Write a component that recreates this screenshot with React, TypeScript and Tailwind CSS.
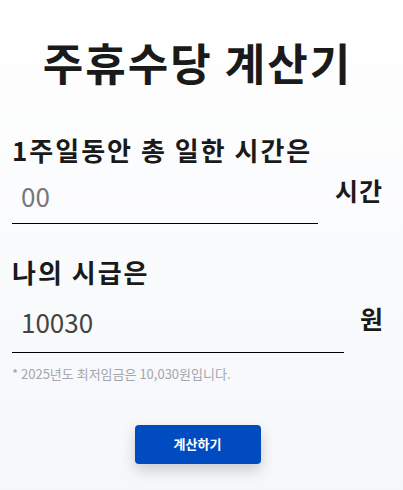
import React, { useState } from "react";

export default function App() {
  const [hours, setHours] = useState("");
  const [wage, setWage] = useState("10030");
  const font = { fontFamily: '"Noto Sans CJK KR", "Noto Sans", sans-serif' };
  return (
    <div
      className="min-h-[490px] w-full bg-gradient-to-b from-white to-[#f5f7fa] text-[#1a1a1a]"
      style={font}
    >
      <div className="mr-2 flex flex-col pt-[30px]">
        <h1 className="text-center text-[44px] font-bold leading-[64px] tracking-[2px]">
          주휴수당 계산기
        </h1>

        <div className="mt-[40px] px-3">
          <label className="block text-[26px] font-bold leading-[32px] tracking-[2px]">
            1주일동안 총 일한 시간은
          </label>
          <div className="mt-[2px] flex items-center">
            <input
              value={hours}
              onChange={(e) => setHours(e.target.value)}
              placeholder="00"
              className="h-[56px] min-w-0 flex-1 border-b border-black bg-transparent px-[9px] text-[26px] text-[#444] placeholder:text-[#777] outline-none"
              style={font}
            />
            <span className="mb-[11px] ml-[17px] text-[25px] font-bold tracking-[1px]">시간</span>
          </div>
        </div>

        <div className="mt-[32px] px-3">
          <label className="block text-[26px] font-bold leading-[32px] tracking-[2px]">나의 시급은</label>
          <div className="mt-[2px] flex items-center">
            <input
              value={wage}
              onChange={(e) => setWage(e.target.value)}
              className="h-[63px] min-w-0 flex-1 border-b border-black bg-transparent px-[9px] text-[26px] text-[#444] outline-none"
              style={font}
            />
            <span className="mb-[6px] ml-[16px] text-[25px] font-bold">원</span>
          </div>
          <p className="mt-[11px] text-[13px] text-[#a3a6ab]">* 2025년도 최저임금은 10,030원입니다.</p>
        </div>

        <div className="mt-[41px] flex justify-center">
          <button className="h-[39px] w-[126px] rounded-[4px] bg-[#004bbf] text-[13px] font-bold text-white shadow-[0_6px_14px_rgba(0,0,0,0.18)]">
            계산하기
          </button>
        </div>
      </div>
    </div>
  );
}
